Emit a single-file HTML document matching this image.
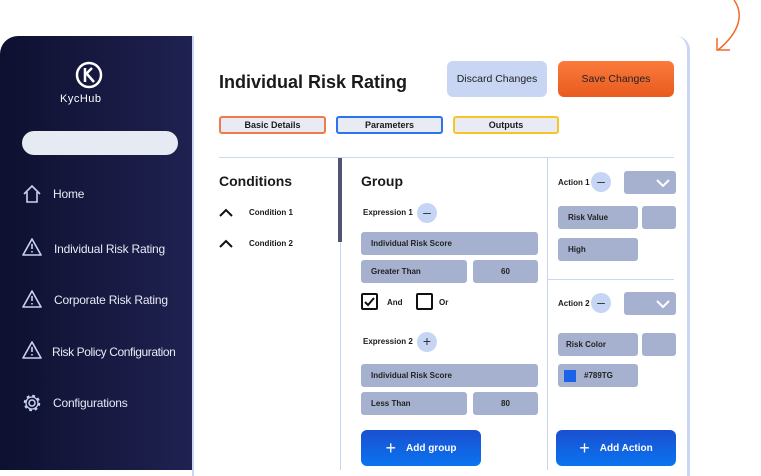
<!DOCTYPE html>
<html><head><style>
*{margin:0;padding:0;box-sizing:border-box}
body{width:761px;height:470px;background:#fff;position:relative;overflow:hidden;font-family:"Liberation Sans",sans-serif;color:#1a1a1a}
.a{position:absolute}
.side{left:0;top:36px;width:192px;height:434px;border-top-left-radius:18px;background:linear-gradient(90deg,#0e1030,#1f2150)}
.nav{color:#e8eaf4;font-size:12px;left:53px;letter-spacing:-0.2px}
.card{left:192px;top:36px;width:498px;height:440px;background:#fff;border-right:3px solid #c9d6f4;border-top-right-radius:14px;border-left:2px solid #c9d6f4}
.f{background:#a5b1cf;border-radius:3px;font-size:8px;font-weight:bold;color:#222;display:flex;align-items:center;padding-left:10px}
.tab{height:18px;top:116px;border-radius:3px;background:#e8ebf4;font-size:9px;font-weight:bold;text-align:center;line-height:14px;border:2px solid}
.circ{width:20px;height:20px;border-radius:50%;background:#c7d5f5;color:#333;text-align:center;line-height:19px;font-size:14px}
.btn{background:linear-gradient(180deg,#1a4fd0,#0a74f0);border-radius:6px;color:#fff;font-size:10px;font-weight:bold;display:flex;align-items:center;justify-content:center;gap:10px}
.sm{font-size:8px;font-weight:bold}
</style></head><body>
<svg class="a" style="left:712px;top:0" width="36" height="56"><path d="M22 0 C32 14 28 32 6 50" stroke="#f06a2a" stroke-width="1.5" fill="none"/><path d="M5 38 L5 50 L18 50" stroke="#f06a2a" stroke-width="1.5" fill="none"/></svg>
<div class="a side"></div>
<svg class="a" style="left:75px;top:61px" width="30" height="30"><circle cx="14" cy="14" r="12" stroke="#fff" stroke-width="2.5" fill="none"/><path d="M10 7 V21 M10 14 L17 7 M12 13 L19 21" stroke="#fff" stroke-width="2.5" fill="none"/></svg>
<div class="a" style="left:60px;top:93px;color:#fff;font-size:11px;letter-spacing:0.5px">KycHub</div>
<div class="a" style="left:22px;top:131px;width:156px;height:24px;border-radius:12px;background:#e6eaf3"></div>
<svg class="a" style="left:22px;top:184px" width="20" height="20"><path d="M2 10 L10 2 L18 10 M5 8 V18 H15 V8" stroke="#c8d3ee" stroke-width="1.6" fill="none"/></svg>
<div class="a nav" style="top:187px">Home</div>
<svg class="a" style="left:22px;top:238px" width="20" height="18"><path d="M10 1 L19 17 H1 Z M10 6 V11 M10 13 V14.5" stroke="#c8d3ee" stroke-width="1.6" fill="none" stroke-linejoin="round"/></svg>
<div class="a nav" style="top:242px;left:54px">Individual Risk Rating</div>
<svg class="a" style="left:22px;top:290px" width="20" height="18"><path d="M10 1 L19 17 H1 Z M10 6 V11 M10 13 V14.5" stroke="#c8d3ee" stroke-width="1.6" fill="none" stroke-linejoin="round"/></svg>
<div class="a nav" style="top:293px;left:54px">Corporate Risk Rating</div>
<svg class="a" style="left:22px;top:341px" width="20" height="18"><path d="M10 1 L19 17 H1 Z M10 6 V11 M10 13 V14.5" stroke="#c8d3ee" stroke-width="1.6" fill="none" stroke-linejoin="round"/></svg>
<div class="a nav" style="top:345px;left:52px;letter-spacing:-0.4px">Risk Policy Configuration</div>
<svg class="a" style="left:22px;top:393px" width="20" height="20"><circle cx="10" cy="10" r="3" stroke="#c8d3ee" stroke-width="1.5" fill="none"/><circle cx="10" cy="10" r="7" stroke="#c8d3ee" stroke-width="2.5" stroke-dasharray="2.7 2.8" fill="none"/><circle cx="10" cy="10" r="6" stroke="#c8d3ee" stroke-width="1.3" fill="none"/></svg>
<div class="a nav" style="top:396px">Configurations</div>

<div class="a card"></div>
<div class="a" style="left:219px;top:72px;font-size:18px;font-weight:bold">Individual Risk Rating</div>
<div class="a" style="left:447px;top:61px;width:100px;height:36px;border-radius:6px;background:#c8d6f4;font-size:10.5px;display:flex;align-items:center;justify-content:center;color:#222">Discard Changes</div>
<div class="a" style="left:558px;top:61px;width:116px;height:36px;border-radius:6px;background:linear-gradient(180deg,#fb7a3c,#e85b1f);font-size:10.5px;display:flex;align-items:center;justify-content:center;color:#222">Save Changes</div>
<div class="a tab" style="left:219px;width:107px;border-color:#f07a4a">Basic Details</div>
<div class="a tab" style="left:336px;width:107px;border-color:#2a74f0">Parameters</div>
<div class="a tab" style="left:453px;width:106px;border-color:#f7c52a">Outputs</div>
<div class="a" style="left:219px;top:157px;width:455px;height:1px;background:#c9d6f4"></div>
<div class="a" style="left:340px;top:157px;width:1px;height:313px;background:#c9d6f4"></div>
<div class="a" style="left:338px;top:158px;width:4px;height:84px;background:#4f5570"></div>
<div class="a" style="left:547px;top:157px;width:1px;height:313px;background:#c9d6f4"></div>
<div class="a" style="left:547px;top:279px;width:127px;height:1px;background:#c9d6f4"></div>

<div class="a" style="left:219px;top:173px;font-size:14px;font-weight:bold">Conditions</div>
<svg class="a" style="left:219px;top:208px" width="14" height="9"><path d="M1 8 L7 2 L13 8" stroke="#111" stroke-width="2" fill="none"/></svg>
<div class="a sm" style="left:249px;top:208px">Condition 1</div>
<svg class="a" style="left:219px;top:239px" width="14" height="9"><path d="M1 8 L7 2 L13 8" stroke="#111" stroke-width="2" fill="none"/></svg>
<div class="a sm" style="left:249px;top:239px">Condition 2</div>

<div class="a" style="left:361px;top:173px;font-size:14px;font-weight:bold">Group</div>
<div class="a sm" style="left:363px;top:208px">Expression 1</div>
<div class="a circ" style="left:417px;top:203px">–</div>
<div class="a f" style="left:361px;top:232px;width:177px;height:23px">Individual Risk Score</div>
<div class="a f" style="left:361px;top:260px;width:106px;height:23px">Greater Than</div>
<div class="a f" style="left:473px;top:260px;width:65px;height:23px;justify-content:center;padding:0">60</div>
<div class="a" style="left:361px;top:293px;width:17px;height:17px;border:2px solid #111;border-radius:2px"><svg width="13" height="13" style="position:absolute;left:0;top:0"><path d="M2 7 L5 10 L11 3" stroke="#111" stroke-width="2" fill="none"/></svg></div>
<div class="a sm" style="left:387px;top:298px">And</div>
<div class="a" style="left:416px;top:293px;width:17px;height:17px;border:2px solid #111;border-radius:2px"></div>
<div class="a sm" style="left:439px;top:298px">Or</div>
<div class="a sm" style="left:363px;top:337px">Expression 2</div>
<div class="a circ" style="left:417px;top:332px">+</div>
<div class="a f" style="left:361px;top:364px;width:177px;height:23px">Individual Risk Score</div>
<div class="a f" style="left:361px;top:392px;width:106px;height:23px">Less Than</div>
<div class="a f" style="left:473px;top:392px;width:65px;height:23px;justify-content:center;padding:0">80</div>
<div class="a btn" style="left:361px;top:430px;width:120px;height:36px"><span style="font-size:18px;font-weight:normal">+</span>Add group</div>

<div class="a sm" style="left:558px;top:178px">Action 1</div>
<div class="a circ" style="left:591px;top:172px">–</div>
<div class="a f" style="left:624px;top:171px;width:52px;height:23px;justify-content:flex-end;padding-right:6px"><svg width="14" height="8"><path d="M1 1 L7 7 L13 1" stroke="#fff" stroke-width="2" fill="none"/></svg></div>
<div class="a f" style="left:558px;top:206px;width:80px;height:23px">Risk Value</div>
<div class="a f" style="left:642px;top:206px;width:34px;height:23px"></div>
<div class="a f" style="left:558px;top:238px;width:80px;height:23px">High</div>
<div class="a sm" style="left:558px;top:299px">Action 2</div>
<div class="a circ" style="left:591px;top:293px">–</div>
<div class="a f" style="left:624px;top:292px;width:52px;height:23px;justify-content:flex-end;padding-right:6px"><svg width="14" height="8"><path d="M1 1 L7 7 L13 1" stroke="#fff" stroke-width="2" fill="none"/></svg></div>
<div class="a f" style="left:558px;top:333px;width:80px;height:23px;padding-left:8px">Risk Color</div>
<div class="a f" style="left:642px;top:333px;width:34px;height:23px"></div>
<div class="a f" style="left:558px;top:364px;width:80px;height:23px;padding-left:6px"><span style="width:12px;height:12px;background:#1a62e8;margin-right:8px;display:inline-block"></span>#789TG</div>
<div class="a btn" style="left:556px;top:430px;width:120px;height:36px"><span style="font-size:18px;font-weight:normal">+</span>Add Action</div>
</body></html>
